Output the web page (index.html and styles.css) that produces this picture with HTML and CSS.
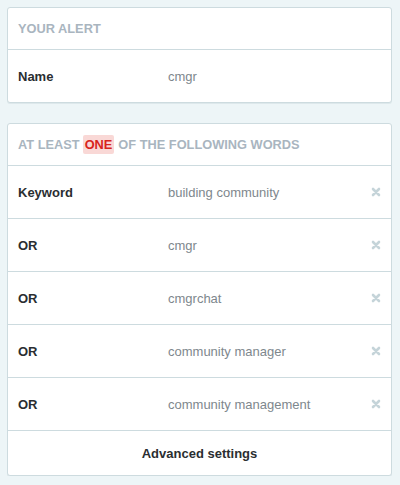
FILE: index.html
```html
<!DOCTYPE html>
<html>
<head>
<meta charset="utf-8">
<link rel="stylesheet" href="styles.css">
</head>
<body>
<div class="card">
  <div class="head">YOUR ALERT</div>
  <div class="row"><span class="label">Name</span><span class="value">cmgr</span></div>
</div>
<div class="card second">
  <div class="head">AT LEAST <span class="hl">ONE</span> OF THE FOLLOWING WORDS</div>
  <div class="row"><span class="label">Keyword</span><span class="value">building community</span><svg class="x" width="10" height="10" viewBox="0 0 10 10"><path d="M2 2L8 8M8 2L2 8"/></svg></div>
  <div class="row"><span class="label">OR</span><span class="value">cmgr</span><svg class="x" width="10" height="10" viewBox="0 0 10 10"><path d="M2 2L8 8M8 2L2 8"/></svg></div>
  <div class="row"><span class="label">OR</span><span class="value">cmgrchat</span><svg class="x" width="10" height="10" viewBox="0 0 10 10"><path d="M2 2L8 8M8 2L2 8"/></svg></div>
  <div class="row"><span class="label">OR</span><span class="value">community manager</span><svg class="x" width="10" height="10" viewBox="0 0 10 10"><path d="M2 2L8 8M8 2L2 8"/></svg></div>
  <div class="row"><span class="label">OR</span><span class="value">community management</span><svg class="x" width="10" height="10" viewBox="0 0 10 10"><path d="M2 2L8 8M8 2L2 8"/></svg></div>
  <div class="adv">Advanced settings</div>
</div>
</body>
</html>
```
FILE: styles.css
```css
html, body { background: #edf5f7; }
body {
  margin: 0;
  padding: 7px 7px 0 7px;
  font-family: "Liberation Sans", Arial, sans-serif;
}
.card {
  width: 385px;
  background: #fff;
  border: 1px solid #cddbdf;
  border-radius: 3px;
  box-sizing: border-box;
  box-shadow: 0 1px 0 #dde8eb;
}
.second { margin-top: 20px; }
.head {
  height: 41px;
  display: flex;
  align-items: center;
  padding-left: 10px;
  font-size: 12.8px;
  font-weight: bold;
  color: #a9b5bf;
  border-bottom: 1px solid #cddbdf;
}
.hl {
  background: #f9d8d6;
  color: #d8241c;
  padding: 2px 2px;
  border-radius: 2px;
  margin: 0 4px 0 3px;
}
.row {
  height: 52px;
  display: flex;
  align-items: center;
  padding-left: 10px;
  border-bottom: 1px solid #cddbdf;
  font-size: 13px;
}
.row:last-child { border-bottom: none; }
.label {
  width: 150px;
  font-weight: bold;
  color: #2a2e31;
}
.value {
  flex: 1;
  color: #7e878d;
}
.x {
  margin-right: 10px;
}
.x path {
  stroke: #c5d4d9;
  stroke-width: 2.6;
  stroke-linecap: round;
  fill: none;
}
.adv {
  height: 44px;
  display: flex;
  align-items: center;
  justify-content: center;
  font-size: 13px;
  font-weight: bold;
  color: #2a2e31;
}
```
